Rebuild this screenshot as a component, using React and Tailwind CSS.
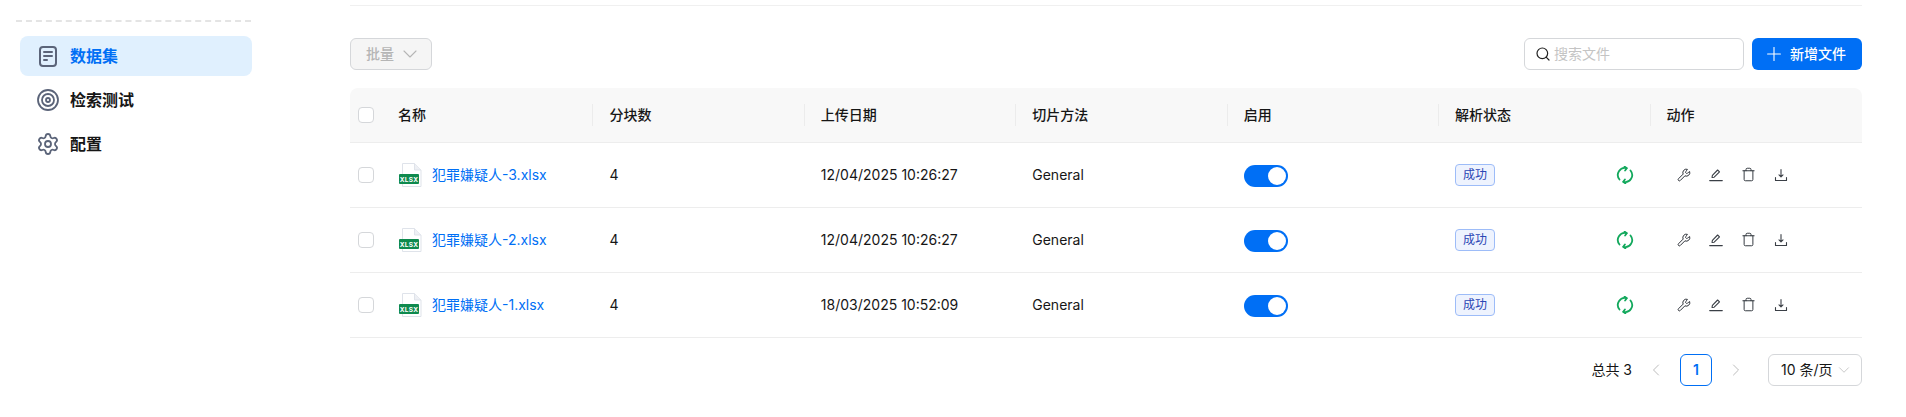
import React from "react";
import { ChevronDown, ChevronLeft, ChevronRight, Plus, Search, Settings, Target, Trash, Wrench } from "lucide-react";

const files = [
  { name: "犯罪嫌疑人-3.xlsx", date: "12/04/2025 10:26:27" },
  { name: "犯罪嫌疑人-2.xlsx", date: "12/04/2025 10:26:27" },
  { name: "犯罪嫌疑人-1.xlsx", date: "18/03/2025 10:52:09" },
];

const columns = ["名称", "分块数", "上传日期", "切片方法", "启用", "解析状态", "动作"];

const DocIcon = () => (
  <svg width="20" height="22" viewBox="0 0 20 22" fill="none" stroke="#5b6479" strokeWidth="2" strokeLinecap="round">
    <rect x="2" y="2" width="16" height="19" rx="3" />
    <path d="M6 7h8M6 11h8M6 15h3" />
  </svg>
);

const ExcelIcon = () => (
  <svg width="24" height="24" viewBox="0 0 24 24" fill="none">
    <path d="M4.5 0.5h12l6.5 6.5v16.5h-18.500z" fill="#fff" stroke="#dfe3ea" />
    <path d="M16.500 0.500v6.500h6.500" fill="#eef0f4" stroke="#dfe3ea" />
    <rect x="1" y="11" width="20" height="10" rx="1" fill="#0f8a4e" />
    <text x="11" y="18.500" textAnchor="middle" fontSize="6.500" letterSpacing="0.300" fontWeight="700" fill="#fff" fontFamily="Inter, sans-serif">XLSX</text>
  </svg>
);

const SyncIcon = () => (
  <svg width="18" height="18" viewBox="0 0 18 18" fill="none" stroke="#12a85c" strokeWidth="1.800" strokeLinecap="round" strokeLinejoin="round">
    <path d="M3.500 13.500A7 7 0 0 1 10.500 2.200" />
    <path d="M14.500 4.500A7 7 0 0 1 7.500 15.800" />
    <path d="M8.600 0.600l2.200 1.700-1.700 2.200" />
    <path d="M9.400 17.400l-2.200-1.700 1.700-2.200" />
  </svg>
);

const PenLine = () => (
  <svg width="14" height="14" viewBox="0 0 14 14" fill="none" stroke="#3a3f46" strokeWidth="1.100" strokeLinejoin="round" strokeLinecap="round">
    <path d="M3 9.500l.4-2.200L8.600 2l1.900 1.900-5.300 5.300z" />
    <path d="M.7 12.600h12.600" />
  </svg>
);

const DownloadLine = () => (
  <svg width="14" height="14" viewBox="0 0 14 14" fill="none" stroke="#3a3f46" strokeWidth="1.100" strokeLinecap="round" strokeLinejoin="round">
    <path d="M7 1.500v7M5 6.800l2 2 2-2" />
    <path d="M1.500 9.500v3h11v-3" />
  </svg>
);

const Checkbox = () => <span className="block h-4 w-4 rounded border border-[#d5d7da] bg-white" />;

export default function App() {
  return (
    <div className="flex h-[417px] w-[1906px] overflow-hidden bg-white font-['Inter','Noto_Sans_CJK_SC',sans-serif] text-[#161616]">
      {/* Sidebar */}
      <aside className="w-[350px] shrink-0 pt-5">
        <div className="ml-4 w-[235px] border-t-2 border-dashed border-[#e4e4e4]" />
        <nav className="ml-5 mt-[14px] w-[232px] space-y-1">
          <a className="flex h-10 items-center gap-3 rounded-lg bg-[#e0f0fe] pl-[18px] text-base font-semibold text-[#006ff5]">
            <DocIcon />
            数据集
          </a>
          <a className="flex h-10 items-center gap-[10px] pl-4 text-base font-semibold">
            <Target size={24} strokeWidth={1.8} color="#5b6479" />
            检索测试
          </a>
          <a className="flex h-10 items-center gap-[10px] pl-4 text-base font-semibold">
            <Settings size={24} strokeWidth={1.8} color="#5b6479" />
            配置
          </a>
        </nav>
      </aside>

      {/* Main */}
      <main className="w-[1512px] shrink-0 pt-[5px]">
        <div className="border-t border-[#f0f0f0]" />
        <div className="mt-8 flex items-center justify-between">
          <button className="flex h-8 w-[82px] items-center gap-1 rounded-md border border-[#d5d7da] bg-[#f5f5f5] pl-[15px] text-sm font-medium text-[#b5b5b5]">
            批量
            <ChevronDown size={24} strokeWidth={1.1} />
          </button>
          <div className="flex items-center gap-2">
            <div className="flex h-8 w-[220px] items-center gap-[3px] rounded-md border border-[#d5d7da] pl-[10px] text-sm text-[#c4c4c4]">
              <Search size={16} strokeWidth={1.8} color="#222" />
              搜索文件
            </div>
            <button className="flex h-8 w-[110px] items-center gap-[5px] rounded-md bg-[#006ff5] pl-[11px] text-sm font-medium text-white">
              <Plus size={22} strokeWidth={1.2} />
              新增文件
            </button>
          </div>
        </div>

        <table className="mt-[18px] w-full table-fixed border-collapse text-sm">
          <thead>
            <tr className="h-[54px] border-b border-[#ededed] bg-[#f8f8f8] text-left">
              <th className="w-8 rounded-tl-lg pl-2">
                <Checkbox />
              </th>
              {columns.map((c, i) => (
                <th key={c} className={`p-0 font-medium ${i === 6 ? "rounded-tr-lg" : ""}`}>
                  <div className={`flex h-[22px] items-center pl-4 ${i < 6 ? "border-r border-[#ececec]" : ""}`}>{c}</div>
                </th>
              ))}
            </tr>
          </thead>
          <tbody>
            {files.map((f) => (
              <tr key={f.name} className="h-[65px] border-b border-[#ededed]">
                <td className="pl-2">
                  <Checkbox />
                </td>
                <td className="px-4">
                  <div className="flex items-center gap-[10px] text-[#006ff5]">
                    <ExcelIcon />
                    {f.name}
                  </div>
                </td>
                <td className="px-4">4</td>
                <td className="px-4">{f.date}</td>
                <td className="px-4">General</td>
                <td className="px-4">
                  <div className="relative mt-[2px] h-[22px] w-11 rounded-full bg-[#006ff5]">
                    <span className="absolute right-[2px] top-[2px] h-[18px] w-[18px] rounded-full bg-white" />
                  </div>
                </td>
                <td className="px-4">
                  <div className="flex items-center justify-between pr-px">
                    <span className="rounded border border-[#9dbcf8] bg-[#eef3fe] px-[7px] text-xs leading-[20px] text-[#2b46b4]">成功</span>
                    <SyncIcon />
                  </div>
                </td>
                <td className="px-4">
                  <div className="flex items-center gap-[18px] pl-[10px]">
                    <Wrench size={14} strokeWidth={1.7} color="#2a2f36" />
                    <PenLine />
                    <Trash size={15} strokeWidth={1.5} color="#2a2f36" />
                    <DownloadLine />
                  </div>
                </td>
              </tr>
            ))}
          </tbody>
        </table>

        <div className="mt-4 flex items-center justify-end text-sm">
          <span>总共 3</span>
          <ChevronLeft size={20} strokeWidth={1.2} color="#bdbdbd" className="ml-[14px]" />
          <span className="ml-[14px] flex h-8 w-8 items-center justify-center rounded-md border border-[#006ff5] font-semibold text-[#006ff5]">1</span>
          <ChevronRight size={20} strokeWidth={1.2} color="#bdbdbd" className="ml-[14px]" />
          <div className="ml-[22px] flex h-8 w-[94px] items-center justify-between rounded-md border border-[#d5d7da] pl-3 pr-[8px]">
            10 条/页
            <ChevronDown size={18} strokeWidth={1.1} color="#bdbdbd" />
          </div>
        </div>
      </main>
    </div>
  );
}
